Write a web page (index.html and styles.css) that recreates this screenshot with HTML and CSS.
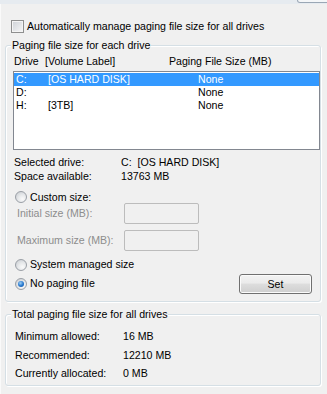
FILE: index.html
```html
<!DOCTYPE html>
<html lang="en">
<head>
    <meta charset="UTF-8">
    <title>Virtual Memory</title>
    <link rel="stylesheet" href="styles.css">
</head>
<body>
    <div class="dialog">
        <!-- faixa superior -->
        <div class="topbar"><span class="topbtn"></span></div>

        <label class="check-row">
            <span class="checkbox"></span>
            Automatically manage paging file size for all drives
        </label>

        <!-- Paging file por drive -->
        <fieldset class="group group-drives">
            <legend>Paging file size for each drive</legend>

            <div class="list-head">
                <span class="col-drive">Drive</span>
                <span class="col-label">[Volume Label]</span>
                <span>Paging File Size (MB)</span>
            </div>

            <div class="listbox">
                <div class="row selected"><span>C:</span><span>[OS HARD DISK]</span><span>None</span></div>
                <div class="row"><span>D:</span><span></span><span>None</span></div>
                <div class="row"><span>H:</span><span>[3TB]</span><span>None</span></div>
            </div>

            <div class="info">
                <span>Selected drive:</span><span>C:&nbsp; [OS HARD DISK]</span>
                <span>Space available:</span><span>13763 MB</span>
            </div>

            <div class="radio-row"><span class="radio"></span>Custom size:</div>

            <div class="field-row">
                <span class="field-label">Initial size (MB):</span>
                <span class="textbox"></span>
            </div>
            <div class="field-row">
                <span class="field-label">Maximum size (MB):</span>
                <span class="textbox"></span>
            </div>

            <div class="bottom">
                <div class="radios">
                    <div class="radio-line"><span class="radio"></span>System managed size</div>
                    <div class="radio-line"><span class="radio on"></span>No paging file</div>
                </div>
                <button class="btn">Set</button>
            </div>
        </fieldset>

        <!-- Totais -->
        <fieldset class="group group-total">
            <legend>Total paging file size for all drives</legend>
            <div class="totals">
                <span>Minimum allowed:</span><span>16 MB</span>
                <span>Recommended:</span><span>12210 MB</span>
                <span>Currently allocated:</span><span>0 MB</span>
            </div>
        </fieldset>
    </div>
</body>
</html>
```

FILE: styles.css
```css
/* Base */
body {
    margin: 0;
    background: #f0f0f0;
    font-family: "Liberation Sans", Arial, sans-serif;
    font-size: 10.6px;
    line-height: 13px;
    color: #000;
}

.dialog {
    width: 327px;
    height: 394px;
    overflow: hidden;
    box-shadow: inset 1px 0 0 #fafafa;
}

/* Faixa do topo */
.topbar {
    height: 4px;
    background: #e6ebf0;
    display: flex;
    justify-content: flex-end;
}

.topbtn {
    width: 34px;
    height: 2px;
    margin-right: -6px;
    border: 1px solid #9aa7b5;
    border-top: none;
    border-radius: 0 0 3px 3px;
    background: #f4f6f8;
}

/* Checkbox */
.check-row {
    display: flex;
    align-items: center;
    gap: 3px;
    height: 13px;
    margin-top: 16px;
    padding-left: 11px;
}

.checkbox {
    width: 13px;
    height: 13px;
    box-sizing: border-box;
    border: 1px solid #8e8f8f;
    background: linear-gradient(135deg, #cdd1d6, #f7f7f7);
    box-shadow: inset 0 0 0 1px #f4f4f4;
}

/* Group boxes */
.group {
    margin: 0 6px 0 5px;
    padding: 0 0 0 5px;
    border: 1px solid #d5dfe5;
    border-radius: 3px;
    box-shadow: 1px 1px 0 #fff, inset 1px 1px 0 #fff;
}

.group legend {
    padding: 0 1px;
    line-height: 13px;
    background: #f0f0f0;
}

.group-drives {
    margin-top: 6px;
    padding-bottom: 7px;
}

.group-total {
    margin-top: 6px;
    padding-bottom: 2px;
}

/* Lista de drives */
.list-head {
    display: flex;
    margin-top: 3px;
    padding-left: 3px;
}

.col-drive { width: 31px; }
.col-label { width: 124px; }

.listbox {
    margin-top: 3px;
    margin-left: 2px;
    height: 79px;
    box-sizing: border-box;
    border: 1px solid #828790;
    background: #fff;
    padding: 1px 0;
}

.row {
    display: grid;
    grid-template-columns: 32px 150px 1fr;
    height: 13px;
    padding-left: 2px;
}

.row.selected {
    background: #3399ff;
    color: #fff;
}

/* Info do drive */
.info {
    display: grid;
    grid-template-columns: 107px 1fr;
    line-height: 14px;
    margin-top: 5px;
    padding-left: 3px;
}

/* Radios */
.radio-row, .radio-line {
    display: flex;
    align-items: center;
    gap: 3px;
    padding-left: 4px;
}

.radio-row {
    margin-top: 8px;
    height: 12px;
}

.radio-line { height: 13px; }
.radio-line + .radio-line { margin-top: 6px; }

.radio {
    position: relative;
    width: 12px;
    height: 12px;
    box-sizing: border-box;
    border-radius: 50%;
    border: 1px solid #9a9fa6;
    background: radial-gradient(circle at 65% 70%, #fafafa 0, #e6e8ea 45%, #c4c8cd 100%);
}

.radio.on::after {
    content: "";
    position: absolute;
    left: 2px;
    top: 2px;
    width: 6px;
    height: 6px;
    border-radius: 50%;
    background: radial-gradient(circle at 40% 35%, #9fd0f5 0, #2b7bd0 50%, #0e4f9b 100%);
}

/* Campos desabilitados */
.field-row {
    display: flex;
    align-items: center;
    height: 21px;
    padding-left: 6px;
    color: #8d8d8d;
}

.field-row + .field-row { margin-top: 6px; }

.field-label { width: 107px; }

.textbox {
    width: 75px;
    height: 21px;
    box-sizing: border-box;
    border: 1px solid #bcbcbc;
    border-radius: 2px;
    background: #f0f0f0;
}

/* Linha com botão */
.bottom {
    display: flex;
    justify-content: space-between;
    align-items: flex-start;
    margin-top: 7px;
}

.btn {
    width: 73px;
    height: 20px;
    margin-top: 16px;
    margin-right: 8px;
    padding: 0;
    font: inherit;
    color: #000;
    border: 1px solid #707070;
    border-radius: 3px;
    background: linear-gradient(#f2f2f2 0%, #ebebeb 45%, #dddddd 50%, #cfcfcf 100%);
    box-shadow: inset 0 0 0 1px #fbfbfb;
}

/* Totais */
.totals {
    display: grid;
    grid-template-columns: 108px 1fr;
    line-height: 18.5px;
    margin-top: 6px;
    padding-left: 4px;
}
```
